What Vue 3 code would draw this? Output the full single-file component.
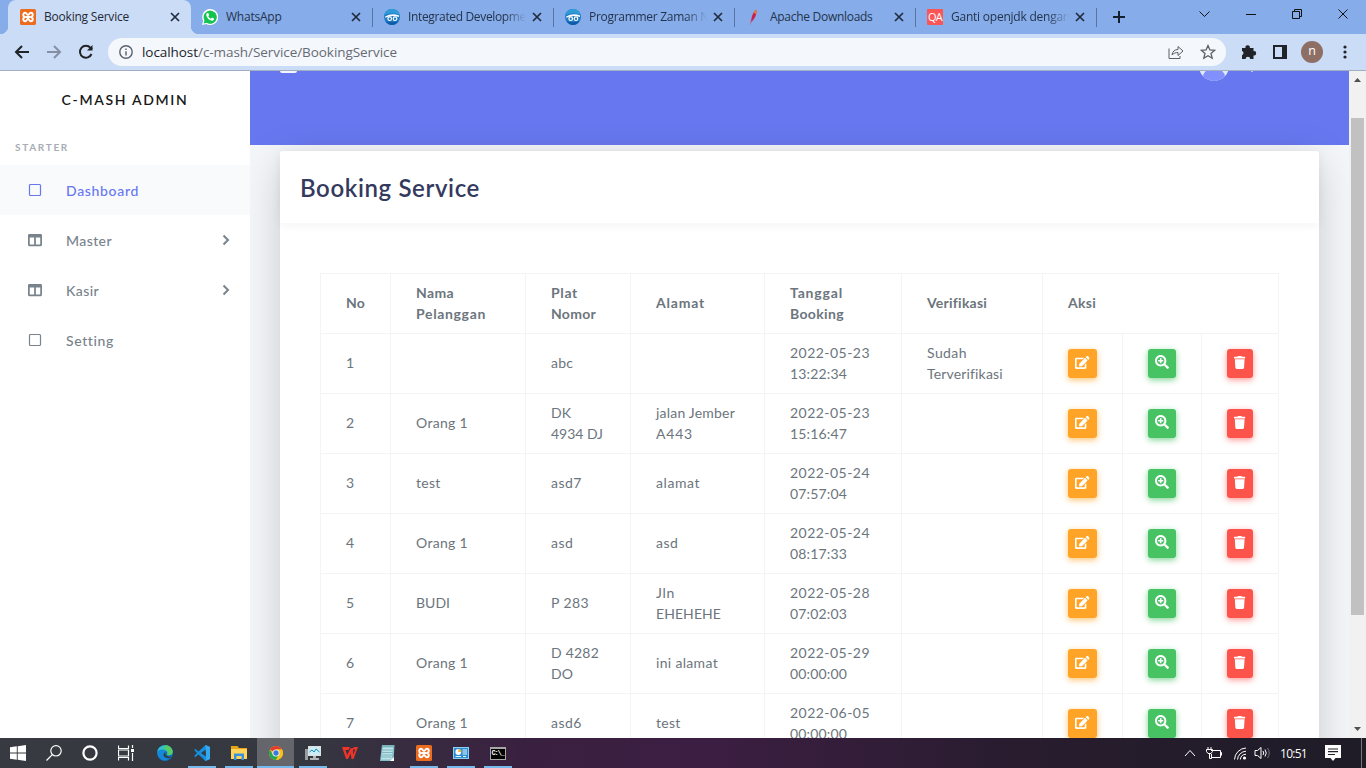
<script setup>
const tabs = [
  { icon: 'xampp', title: 'Booking Service', w: 85, active: true },
  { icon: 'whatsapp', title: 'WhatsApp', w: 55.5 },
  { icon: 'goggles', title: 'Integrated Developmen', w: 125, sep: true },
  { icon: 'goggles', title: 'Programmer Zaman No', w: 127, sep: true },
  { icon: 'feather', title: 'Apache Downloads', w: 102.5, sep: true },
  { icon: 'qa', title: 'Ganti openjdk dengan', w: 119, sep: true },
]
const menu = [
  { label: 'Dashboard', w: 73, icon: 'square', active: true },
  { label: 'Master', w: 46, icon: 'columns', more: true },
  { label: 'Kasir', w: 33, icon: 'columns', more: true },
  { label: 'Setting', w: 47.5, icon: 'square' },
]
const heads = [
  [['No', 19]],
  [['Nama', 38], ['Pelanggan', 70]],
  [['Plat', 27], ['Nomor', 45]],
  [['Alamat', 49]],
  [['Tanggal', 53], ['Booking', 54]],
  [['Verifikasi', 60]],
]
const date = (d, t) => [[d, 80], [t, 57]]
const rows = [
  [[['1', 8]], [], [['abc', 22]], [], date('2022-05-23', '13:22:34'), [['Sudah', 40], ['Terverifikasi', 75.5]]],
  [[['2', 8]], [['Orang 1', 52]], [['DK', 20], ['4934 DJ', 52]], [['jalan Jember', 79], ['A443', 37]], date('2022-05-23', '15:16:47'), []],
  [[['3', 8]], [['test', 24.5]], [['asd7', 31]], [['alamat', 44]], date('2022-05-24', '07:57:04'), []],
  [[['4', 8]], [['Orang 1', 52]], [['asd', 22.5]], [['asd', 22.5]], date('2022-05-24', '08:17:33'), []],
  [[['5', 8]], [['BUDI', 34]], [['P 283', 38]], [['Jln', 19], ['EHEHEHE', 65]], date('2022-05-28', '07:02:03'), []],
  [[['6', 8]], [['Orang 1', 52]], [['D 4282', 48], ['DO', 22]], [['ini alamat', 62]], date('2022-05-29', '00:00:00'), []],
  [[['7', 8]], [['Orang 1', 52]], [['asd6', 31]], [['test', 24.5]], date('2022-06-05', '00:00:00'), []],
]
const apps = [
  { id: 'edge' }, { id: 'code', open: true }, { id: 'folder', open: true },
  { id: 'chrome', open: true, active: true }, { id: 'monitor', open: true },
  { id: 'wps' }, { id: 'notepad' }, { id: 'xampp', open: true },
  { id: 'panel', open: true }, { id: 'cmd', open: true },
]
/* Tracks a label so that it takes the given width in pixels. */
const vFit = {
  mounted(el, { value }) {
    el.style.letterSpacing = '0px'
    const natural = el.getBoundingClientRect().width
    el.style.letterSpacing = (value - natural) / el.textContent.length + 'px'
  },
}
</script>

<template>
  <div class="screen">
    <svg class="defs" width="0" height="0">
      <symbol id="xampp" viewBox="0 0 16 16">
        <rect width="16" height="16" rx="1.6" fill="#ec6d1e" />
        <path d="M5.2 8C2.6 7.5 2.6 3.8 5.2 3.8C6.8 3.8 6.8 6 8 6S9.2 3.8 10.8 3.8C13.4 3.8 13.4 7.5 10.8 8C13.4 8.5 13.4 12.2 10.8 12.2C9.2 12.2 9.2 10 8 10S6.8 12.2 5.2 12.2C2.6 12.2 2.6 8.5 5.2 8ZM5.5 8H10.5" fill="none" stroke="#fff" stroke-width="1.9" />
      </symbol>
      <symbol id="whatsapp" viewBox="0 0 16 16">
        <path d="M0 16 1.2 11.8A8 8 0 1 1 4.2 14.900Z" fill="#fff" />
        <path d="M1.6 14.5 2.5 11.5A6.600 6.600 0 1 1 4.600 13.700Z" fill="#12c350" />
        <path d="M5.500 4c-.9.3-1.500 1.200-1.200 2.400.6 2.500 3 4.800 5.500 5.300 1.100.2 2.100-.4 2.200-1.400v-.7L10 8.600l-1.100 1.100C7.700 9.200 6.900 8.400 6.300 7.300l.8-1-.8-2.200Z" fill="#fff" />
      </symbol>
      <symbol id="goggles" viewBox="0 0 16 16">
        <circle cx="8" cy="8" r="8" fill="#1f7ac4" />
        <path d="M.3 6C2-2 14-2 15.700 6Q8 2.500 .3 6Z" fill="#2f9ad8" />
        <path d="M1.200 7.500Q8 3.300 15 6.600V8Q8 5.500 1.200 8.800Z" fill="#fff" />
        <g fill="none" stroke="#fff" stroke-width="1.200"><circle cx="5.700" cy="9.700" r="1.800" /><circle cx="11" cy="9.700" r="1.800" /></g>
        <path d="M1.500 12Q8 14.500 14.500 12Q12 16 8 16T1.500 12Z" fill="#0d5aa8" />
      </symbol>
      <symbol id="feather" viewBox="0 0 16 16">
        <path d="M4.300 13.500 5.300 10.500C6 6 7.500 2.500 10.300.7C11 4 9.700 8.500 6.700 11.500L5 14Z" fill="#c8234e" />
        <path d="M7.800 3.600Q9 1.300 10.300.7L10.800 1Q10.900 3.500 10 5.400Z" fill="#ed792c" />
        <path d="M5.500 12 3.700 15.800" stroke="#a988ba" />
      </symbol>
      <symbol id="edge" viewBox="0 0 16 16">
        <circle cx="8" cy="8" r="8" fill="#0c70bd" />
        <path d="M.3 7C1-.5 12-2.500 15.300 4.700 17 9 13.500 11.300 10 9.700 11.700 7.500 9.500 5.300 7 5.300 3.600 5.300 1.300 6 .3 7Z" fill="#35c1c5" />
        <path d="M9 0C15 1 17 7.300 14.300 9.500 12.500 10.700 10.700 10.200 10 9.700 11.500 7 9.500 4.500 7 3.500Z" fill="#57cc62" />
        <path d="M.1 7C3 3.200 8.400 4.300 9.200 6.800 5.700 6.800 5.800 13 12.500 13.200 8.500 17 1 16 .1 7Z" fill="#1588d8" />
        <path d="M8.500 7.300C7 9.800 9.300 12.500 14.800 11.500 12 14.800 6 12.800 6.500 9Z" fill="#363940" />
      </symbol>
      <symbol id="code" viewBox="0 0 16 16">
        <path d="M11.500 0 16 2V14L11.500 16 4.500 9.500 1.500 12 0 11.200 3 8 0 4.800 1.500 4 4.500 6.500ZM12 4.500 7 8 12 11.500Z" fill="#168fdd" fill-rule="evenodd" />
        <path d="M11.500 0 16 2V14L11.500 16 12 13Z" fill="#35a9ed" />
      </symbol>
      <symbol id="folder" viewBox="0 0 16 16">
        <path d="M0 1H6.500L8 3H16V14H0Z" fill="#e6a519" /><path d="M0 4H16V14H0Z" fill="#ffd45c" />
        <path d="M3 15V8.500H13V15H10.500V11H5.500V15Z" fill="#3b92dc" />
      </symbol>
      <symbol id="chrome" viewBox="0 0 16 16">
        <circle cx="8" cy="8" r="7" fill="#fbc116" />
        <path d="M8 8 1.940 4.500A7 7 0 0 1 14.060 4.500H8Z" fill="#e33b2e" />
        <path d="M8 15A7 7 0 0 1 1.940 4.500L5 9.900 10.800 9.800Z" fill="#25a653" />
        <path d="M11.100 9.700 8 15A7 7 0 0 0 14.060 4.500H8Z" fill="#fbc116" />
        <circle cx="8" cy="8" r="3.500" fill="#fff" /><circle cx="8" cy="8" r="2.700" fill="#3878e4" />
      </symbol>
      <symbol id="monitor" viewBox="0 0 16 16">
        <path d="M0 4H3V15H0Z" fill="#999ea0" /><path d="M3 1H16V11H3Z" fill="#dce2e2" />
        <path d="M4.500 2.500H14.500V9.500H4.500Z" fill="#c8eff8" /><path d="M4.500 7 7 5 9 7 11 4 14.500 7" fill="none" stroke="#168bb6" />
        <path d="M8 11H11V13H14V15H5V13H8Z" fill="#b1b5b6" />
      </symbol>
      <symbol id="wps" viewBox="0 0 16 16">
        <path d="M0 2H8L6.500 5H3.500L5.300 10 8.300 3.500 11 3V9.500L13.300 4.500H10.500L12 2H16L11.500 14H9.500L8.700 8.500 6 14H4Z" fill="#ee3328" />
      </symbol>
      <symbol id="notepad" viewBox="0 0 16 16">
        <path d="M3 0H15.500L14.500 16H1Z" fill="#85bfca" /><path d="M4 2.500H14L12.500 14.500H2Z" fill="#b8e4ea" />
        <path d="M3 1H15M3.500 5H13.500M3 7.500H13.500M3 10H13M2.500 12H12" stroke="#6b9da8" stroke-width=".7" /><path d="M11 16 15 12V16Z" fill="#fff" />
      </symbol>
      <symbol id="panel" viewBox="0 0 16 16">
        <path d="M0 2H16V14H0Z" fill="#8dd0f3" /><path d="M1 3H15V13H1Z" fill="#2c8ed0" />
        <circle cx="5.300" cy="7" r="2.900" fill="#fff" /><path d="M5.300 4A3 3 0 0 1 8.300 7H5.300Z" fill="#f8af31" />
        <path d="M9.500 5H14M9.500 7H14M9.500 9H14M2.500 11.500H8M10 11.500H13" stroke="#e9f8ff" />
      </symbol>
      <symbol id="i-edit" viewBox="0 0 576 512"><path fill="currentColor" d="M402.600 83.200l90.200 90.200c3.800 3.800 3.800 10 0 13.800L274.400 405.600l-92.800 10.300c-12.400 1.400-22.900-9.100-21.500-21.500l10.300-92.800L388.800 83.200c3.800-3.800 10-3.800 13.800 0zm162-22.900l-48.800-48.800c-15.200-15.200-39.900-15.200-55.200 0l-35.400 35.400c-3.800 3.800-3.800 10 0 13.800l90.200 90.200c3.800 3.800 10 3.800 13.800 0l35.400-35.400c15.200-15.300 15.200-40 0-55.200zM384 346.200V448H64V128h229.800c3.200 0 6.200-1.300 8.500-3.500l40-40c7.600-7.600 2.200-20.500-8.500-20.500H48C21.500 64 0 85.500 0 112v352c0 26.500 21.500 48 48 48h352c26.500 0 48-21.500 48-48V306.200c0-10.700-12.900-16-20.500-8.500l-40 40c-2.200 2.300-3.500 5.300-3.500 8.500z" /></symbol>
      <symbol id="i-zoom" viewBox="0 0 512 512"><path fill="currentColor" d="M304 192v32c0 6.600-5.400 12-12 12h-56v56c0 6.600-5.400 12-12 12h-32c-6.600 0-12-5.400-12-12v-56h-56c-6.600 0-12-5.400-12-12v-32c0-6.600 5.400-12 12-12h56v-56c0-6.600 5.400-12 12-12h32c6.600 0 12 5.400 12 12v56h56c6.600 0 12 5.400 12 12zm201 284.700L476.700 505c-9.400 9.400-24.600 9.400-33.900 0L343 405.300c-4.500-4.500-7-10.600-7-17V372c-35.300 27.600-79.700 44-128 44C93.100 416 0 322.900 0 208S93.100 0 208 0s208 93.100 208 208c0 48.300-16.400 92.700-44 128h16.300c6.400 0 12.500 2.500 17 7l99.700 99.700c9.300 9.400 9.300 24.600 0 34zM344 208c0-75.200-60.800-136-136-136S72 132.800 72 208s60.800 136 136 136 136-60.800 136-136z" /></symbol>
      <symbol id="i-trash" viewBox="0 0 448 512"><path fill="currentColor" d="M432 32H312l-9.400-18.700A24 24 0 0 0 281.100 0H166.800a23.720 23.720 0 0 0-21.400 13.300L136 32H16A16 16 0 0 0 0 48v32a16 16 0 0 0 16 16h416a16 16 0 0 0 16-16V48a16 16 0 0 0-16-16zM53.200 467a48 48 0 0 0 47.900 45h245.800a48 48 0 0 0 47.900-45L416 128H32z" /></symbol>
      <symbol id="i-columns" viewBox="0 0 512 512"><path fill="currentColor" d="M464 32H48C21.490 32 0 53.490 0 80v352c0 26.510 21.490 48 48 48h416c26.510 0 48-21.490 48-48V80c0-26.510-21.490-48-48-48zM224 416H64V160h160v256zm224 0H288V160h160v256z" /></symbol>
      <symbol id="i-square" viewBox="0 0 14 14"><rect x="1.500" y="1.500" width="11" height="11" rx="1" fill="none" stroke="currentColor" stroke-width="1.200" /></symbol>
    </svg>

    <header class="tabstrip">
      <div v-for="(t, i) in tabs" :key="i" class="tab" :class="{ active: t.active, sep: t.sep }">
        <span v-if="t.icon === 'qa'" class="qa"><span v-fit="14">QA</span></span>
        <svg v-else class="fav"><use :href="'#' + t.icon" /></svg>
        <span class="title" :class="{ fade: i === 2 || i === 3 || i === 5 }"><span v-fit="t.w">{{ t.title }}</span></span>
        <svg class="close" viewBox="0 0 10 10"><path d="M1 1 9 9M9 1 1 9" /></svg>
      </div>
      <svg class="plus" viewBox="0 0 12 12"><path d="M6 0V12M0 6H12" /></svg>
      <div class="winctl">
        <svg viewBox="0 0 46 28"><path d="M17.500 11.500 22.500 16.500 27.500 11.500" /></svg>
        <svg viewBox="0 0 46 28"><path d="M18 14.500H28" /></svg>
        <svg viewBox="0 0 46 28"><path d="M18.500 11.500H25.500V18.500H18.500ZM20.500 11V9.500H27.500V16.500H26" /></svg>
        <svg viewBox="0 0 46 28"><path d="M18.500 9.500 27.500 18.500M27.500 9.500 18.500 18.500" /></svg>
      </div>
    </header>

    <div class="toolbar">
      <svg class="nav" viewBox="0 0 16 16"><path d="M15 8H2M8 2 2 8 8 14" /></svg>
      <svg class="nav dim" viewBox="0 0 16 16"><path d="M1 8H14M8 2 14 8 8 14" /></svg>
      <svg class="nav" viewBox="0 0 16 16"><path d="M13.500 10A6 6 0 1 1 12.500 3.800L14 5.300" /><path d="M14.500 1V6.500H9Z" class="solid" /></svg>
      <div class="address">
        <svg class="info" viewBox="0 0 14 14"><circle cx="7" cy="7" r="6.200" /><path d="M7 6.200V10.500M7 3.500V5" /></svg>
        <span class="url" v-fit="255">localhost<i>/c-mash/Service/BookingService</i></span>
        <svg class="share" viewBox="0 0 16 16"><path d="M1 4.500V14.500H12V12M4 11C4.500 7.500 6.500 5.500 10 5.500V2.500L15 7 10 11.500V8.500C7.500 8.500 5.500 9.300 4 11Z" /></svg>
        <svg class="star" viewBox="0 0 16 16"><path d="M8 1.500 9.900 5.900 14.700 6.300 11 9.500 12.200 14.200 8 11.700 3.800 14.200 5 9.500 1.300 6.300 6.100 5.900Z" /></svg>
      </div>
      <svg class="puzzle" viewBox="0 0 16 16"><path d="M1 4H4.500A2.200 2.200 0 1 1 8.800 4H12.500V7.200A2.200 2.200 0 1 1 12.500 11.500V15H9.200A2.300 2.300 0 0 0 4.600 15H1V11.200A2.200 2.200 0 0 0 1 7Z" /></svg>
      <svg class="side" viewBox="0 0 14 14"><path d="M1 1H13V13H1Z" /><path d="M9 0H14V14H9Z" class="solid" /></svg>
      <span class="avatar">n</span>
      <svg class="dots" viewBox="0 0 4 14"><circle cx="2" cy="2" r="1.600" /><circle cx="2" cy="7" r="1.600" /><circle cx="2" cy="12" r="1.600" /></svg>
    </div>

    <div class="viewport">
      <aside class="sidebar">
        <div class="brand"><span v-fit="127">C-MASH ADMIN</span></div>
        <div class="section"><span v-fit="54">STARTER</span></div>
        <div v-for="m in menu" :key="m.label" class="item" :class="{ active: m.active }">
          <svg class="mi"><use :href="'#i-' + m.icon" /></svg>
          <span class="ml"><span v-fit="m.w">{{ m.label }}</span></span>
          <svg v-if="m.more" class="chev" viewBox="0 0 8 12"><path d="M1.500 1.500 6 6 1.500 10.500" /></svg>
        </div>
      </aside>

      <main class="main">
        <div class="band">
          <span class="burger"></span>
          <span class="user"><span class="shirt"></span></span>
          <span class="speck"></span>
        </div>
        <section class="card">
          <div class="card-head"><h4><span v-fit="180">Booking Service</span></h4></div>
          <table>
            <colgroup>
              <col class="c1" /><col class="c2" /><col class="c3" /><col class="c4" /><col class="c5" />
              <col class="c6" /><col class="c7" /><col class="c8" /><col class="c9" />
            </colgroup>
            <thead>
              <tr>
                <th v-for="(h, i) in heads" :key="i">
                  <div v-for="l in h" :key="l[0]"><span v-fit="l[1]">{{ l[0] }}</span></div>
                </th>
                <th colspan="3"><div><span v-fit="28">Aksi</span></div></th>
              </tr>
            </thead>
            <tbody>
              <tr v-for="(r, i) in rows" :key="i">
                <td v-for="(c, j) in r" :key="j">
                  <div v-for="l in c" :key="l[0]"><span v-fit="l[1]">{{ l[0] }}</span></div>
                </td>
                <td class="act"><button class="edit"><svg><use href="#i-edit" /></svg></button></td>
                <td class="act"><button class="zoom"><svg><use href="#i-zoom" /></svg></button></td>
                <td class="act"><button class="trash"><svg><use href="#i-trash" /></svg></button></td>
              </tr>
            </tbody>
          </table>
        </section>
      </main>

      <div class="scroll">
        <svg viewBox="0 0 17 17"><path d="M5 11 8.500 7 12 11Z" /></svg>
        <div class="thumb"></div>
        <svg class="down" viewBox="0 0 17 17"><path d="M5 6 8.500 10 12 6Z" /></svg>
      </div>
    </div>

    <footer class="taskbar">
      <div class="sys"><svg viewBox="0 0 16 16"><path class="fillw" d="M0 2.300 6.800 1.300V7.600H0ZM7.700 1.200 16 0V7.600H7.700ZM0 8.500H6.800V14.700L0 13.700ZM7.700 8.500H16V16L7.700 14.800Z" /></svg></div>
      <div class="sys"><svg viewBox="0 0 16 16"><circle cx="10" cy="5.800" r="5.200" /><path d="M6.300 9.600.5 15.500" /></svg></div>
      <div class="sys"><svg viewBox="0 0 16 16"><circle cx="8" cy="8" r="6.600" class="ring" /></svg></div>
      <div class="sys"><svg viewBox="0 0 16 16"><path d="M.5.500V3.500H10.500V.500M.5 15.500V12.500H10.500V15.500M.5 5H10.500V11H.5ZM14.500 0V3M14.500 8V16" /><path d="M13 4H16V7H13Z" class="fillw" /></svg></div>
      <div v-for="(a, i) in apps" :key="i" class="app" :class="{ open: a.open, active: a.active }">
        <span v-if="a.id === 'cmd'" class="cmd"><b v-fit="12">C:\_</b></span>
        <svg v-else><use :href="'#' + a.id" /></svg>
      </div>
      <div class="tray">
        <svg class="up" viewBox="0 0 12 8"><path d="M1 7 6 1.500 11 7" /></svg>
        <svg class="bat" viewBox="0 0 16 14"><path d="M5 4.500H14.500V11.500H5.500M14.500 6.500H15.500V9.500M2 1V3.500M5 1V3.500M.5 3.500H6.500V5.500L5 7.500H2L.5 5.500ZM3.500 7.500V12.500H5.500V8" /></svg>
        <svg class="wifi" viewBox="0 0 14 14"><path d="M1.500 13.500A12 12 0 0 1 13 2M4.500 13.500A9 9 0 0 1 13 5.200M7.300 13.500A6 6 0 0 1 13 8.200" /><circle cx="11.500" cy="12" r="1.600" class="fillw" /></svg>
        <svg class="vol" viewBox="0 0 17 14"><path d="M1 4.500H3.500L7 1.500V12.500L3.500 9.500H1Z" /><path d="M9 5Q10.500 7 9 9M11 3.500Q13.500 7 11 10.500" /><path class="low" d="M13.500 2Q17 7 13.500 12" /></svg>
        <span class="clock"><span v-fit="27">10:51</span></span>
        <svg class="note" viewBox="0 0 16 16"><path class="fillw" d="M0 0H16V13H10.500L8 16 5.500 13H0Z" /><path class="ln" d="M3 4H13M3 6.700H13M3 9.500H10" /></svg>
      </div>
    </footer>
  </div>
</template>

<style>
body { overflow: hidden; }
</style>

<style scoped>
* { box-sizing: border-box; }
.screen { width: 1366px; height: 768px; display: flex; flex-direction: column; overflow: hidden; font-family: "Open Sans", "Noto Sans", sans-serif; }
svg { display: block; flex: none; fill: none; stroke-width: 1; }
.defs { position: absolute; }
span { white-space: nowrap; }

.tabstrip { height: 34px; flex: none; background: #86ace9; display: flex; padding-left: 8px; }
.tab { position: relative; width: 181px; height: 34px; display: flex; align-items: center; padding: 0 9px 0 13px; font-size: 12px; color: #24344c; }
.tab:nth-child(2) { padding-left: 12px; }
.tab.active { width: 183px; margin-right: -1px; padding: 0 10px 0 12px; background: #cbdcf6; border-radius: 8px 8px 0 0; color: #1f2937; }
.tab.active::before, .tab.active::after { content: ""; position: absolute; bottom: 0; width: 8px; height: 8px; }
.tab.active::before { left: -8px; background: radial-gradient(circle at 0 0, transparent 8px, #cbdcf6 8.500px); }
.tab.active::after { right: -8px; background: radial-gradient(circle at 100% 0, transparent 8px, #cbdcf6 8.500px); }
.tab.sep::before { content: ""; position: absolute; left: 1px; top: 8px; width: 1px; height: 19px; background: #56749f; }
.tab:nth-child(6)::after { content: ""; position: absolute; right: -2px; top: 8px; width: 1px; height: 19px; background: #56749f; }
.fav { width: 16px; height: 16px; }
.qa { width: 16px; height: 16px; background: #fa5657; color: #fff; border-radius: 1px; font-size: 11px; line-height: 16px; padding-left: 1px; }
.title { margin-left: 8px; width: 118px; overflow: hidden; line-height: 18px; flex: none; }
.title span { display: inline-block; }
.fade { -webkit-mask-image: linear-gradient(90deg, #000 82%, transparent); mask-image: linear-gradient(90deg, #000 82%, transparent); }
.close { width: 10px; height: 10px; margin-left: auto; stroke: #202c3e; stroke-width: 1.700; margin-right: 1px; }
.plus { width: 12px; height: 12px; margin: 11px 0 0 18px; stroke: #15202f; stroke-width: 2; }
.winctl { margin-left: auto; display: flex; }
.winctl svg { width: 46px; height: 28px; stroke: #111; }

.toolbar { height: 37px; flex: none; background: #cbdcf6; border-bottom: 1px solid #a3aec5; display: flex; align-items: center; padding-left: 14px; }
.nav { width: 16px; height: 16px; margin-right: 16px; stroke: #202327; stroke-width: 2; }
.nav.dim { stroke: #858fa4; }
.nav .solid { fill: #202327; stroke: none; }
.address { width: 1118px; height: 28px; margin-left: -2px; border-radius: 14px; background: #f4f7fc; display: flex; align-items: center; padding: 0 10px 0 11px; }
.info { width: 14px; height: 14px; stroke: #5b6067; stroke-width: 1.400; }
.url { font-size: 13.500px; margin-left: 9px; color: #20242a; }
.url i { font-style: normal; color: #666b73; }
.share { width: 16px; height: 16px; margin-left: auto; stroke: #5b6067; }
.star { width: 16px; height: 16px; margin-left: 16px; stroke: #5b6067; stroke-width: 1.300; }
.puzzle { width: 16px; height: 16px; margin-left: 15px; fill: #202327; }
.side { width: 14px; height: 14px; margin-left: 16px; stroke: #202327; stroke-width: 2; }
.side .solid { fill: #202327; stroke: none; }
.avatar { width: 22px; height: 22px; margin-left: 14px; border-radius: 50%; background: #8e6f66; color: #fff; font: 12.500px/20px "Open Sans", sans-serif; text-align: center; }
.dots { width: 4px; height: 14px; margin-left: 20px; fill: #202327; }

.viewport { flex: 1; min-height: 0; display: flex; overflow: hidden; font-family: Lato, "Open Sans", sans-serif; }
.sidebar { width: 250px; flex: none; background: #fff; }
.brand { height: 60px; line-height: 58px; text-align: center; font-family: "Lato Semibold", "Lato Medium", Lato, sans-serif; font-size: 14px; font-weight: 600; color: #181818; }
.section { height: 34px; line-height: 33px; padding-left: 15px; font-size: 10px; font-weight: 700; color: #a6adb5; }
.item { height: 50px; display: flex; align-items: center; padding-left: 28px; color: #78838c; font-size: 14px; font-family: "Lato Medium", Lato, sans-serif; font-weight: 500; }
.item.active { background: #f9fafc; color: #6777ef; }
.mi { width: 14px; height: 14px; }
.ml { margin-left: 24px; padding-top: 2px; line-height: 20px; }
.chev { width: 8px; height: 12px; margin: -1px 20px 0 auto; stroke: #78838c; stroke-width: 2; }
.main { width: 1099px; flex: none; background: #f4f6f9; overflow: hidden; }
.band { height: 74px; background: #6777ef; display: flex; align-items: flex-start; }
.burger { width: 17px; height: 2px; margin-left: 30px; background: #f5f6ff; border-radius: 0 0 2px 2px; }
.user { width: 30px; height: 30px; margin: -20px 0 0 902px; border-radius: 50%; background: #e2ebfa; overflow: hidden; flex: none; }
.shirt { display: block; width: 22px; height: 18px; margin: 17px 0 0 4px; border-radius: 50%; background: #8190fc; }
.speck { width: 2px; height: 1px; margin-left: 22px; background: #bcc4fa; }
.card { width: 1039px; height: 900px; margin: 6px 0 0 30px; background: #fff; border-radius: 3px; box-shadow: 0 10px 40px rgba(0, 0, 0, .18); }
.card-head { height: 72px; padding-left: 20px; box-shadow: 0 2px 10px rgba(0, 0, 0, .05); }
h4 { margin: 0; font-family: "Lato Semibold", Lato, sans-serif; font-size: 24px; line-height: 74px; font-weight: 600; color: #34395e; }
table { table-layout: fixed; width: 959px; margin: 50px 0 0 40px; border-spacing: 0; border: solid #f4f4f5; border-width: 1px 0 0 1px; }
.c1 { width: 70px; } .c2 { width: 135px; } .c3 { width: 105px; } .c4 { width: 134px; } .c5 { width: 137px; }
.c6 { width: 141px; } .c7 { width: 80px; } .c8 { width: 79px; } .c9 { width: 77px; }
th, td { height: 60px; padding: 0 0 2px 25px; border: solid #f4f4f5; border-width: 0 1px 1px 0; text-align: left; vertical-align: middle; font-size: 14px; line-height: 21px; color: #6c757d; white-space: nowrap; }
td.act { padding-bottom: 0; }
th { font-weight: 700; }
td { font-weight: 400; }
button { display: flex; justify-content: center; height: 29px; padding: 7px 0 0; border: 0; border-radius: 3px; color: #fff; }
button svg { height: 13px; }
.edit { width: 29px; background: #ffa426; box-shadow: 0 2px 6px #ffc473; }
.edit svg { width: 14.600px; }
.zoom { width: 28px; background: #47c363; box-shadow: 0 2px 6px #81d694; padding-top: 6px; }
.zoom svg { width: 14px; height: 14px; }
.trash { width: 26px; background: #fc544b; box-shadow: 0 2px 6px #fd9b96; }
.trash svg { width: 11.400px; }

.scroll { width: 17px; flex: none; background: #f1f1f1; display: flex; flex-direction: column; }
.scroll svg { width: 17px; height: 17px; fill: #505050; }
.thumb { width: 13px; height: 497px; margin: 30px 0 0 2px; background: #c1c1c1; }
.down { margin-top: auto; }

.taskbar { height: 30px; flex: none; display: flex; background: linear-gradient(90deg, #373a40 0, #353840 22%, #3a2040 38%, #3c1e42 52%, #281c2e 75%, #1e1c27 100%); }
.sys { width: 36px; display: flex; align-items: center; justify-content: center; }
.sys svg { width: 16px; height: 16px; stroke: #fff; stroke-width: 1.200; }
.sys .fillw { fill: #fff; stroke: none; }
.sys .ring { stroke-width: 2.200; }
.sys + .app { margin-left: 2px; }
.app { width: 37px; display: flex; align-items: center; justify-content: center; position: relative; }
.app svg { width: 16px; height: 16px; }
.app.open::after { content: ""; position: absolute; bottom: 0; left: 5px; width: 28px; height: 2px; background: #76b9ed; }
.app.active { background: #64666b; }
.app.active::after { left: 0; width: 37px; }
.cmd { width: 16px; height: 13px; background: #000; border: 1px solid #a7a7a7; border-top-width: 2px; color: #fff; font: 700 7px/9px "Liberation Mono", monospace; text-align: left; padding-left: 1px; }
.tray { margin-left: auto; display: flex; align-items: center; width: 182px; border-right: 1px solid #77747c; margin-right: 4px; }
.tray svg { stroke: #fff; }
.tray .fillw { fill: #fff; stroke: none; }
.up { width: 12px; height: 8px; margin-left: 4px; }
.bat { width: 16px; height: 14px; margin-left: 10px; }
.wifi { width: 14px; height: 14px; margin-left: 11px; }
.vol { width: 17px; height: 14px; margin-left: 7px; }
.tray .low { stroke: #77737d; }
.clock { margin-left: 9px; color: #fff; font-size: 12px; width: 28px; }
.tray .note { width: 16px; height: 16px; margin-left: 17px; }
.tray .ln { stroke: #22202b; stroke-width: 1.200; }
</style>
